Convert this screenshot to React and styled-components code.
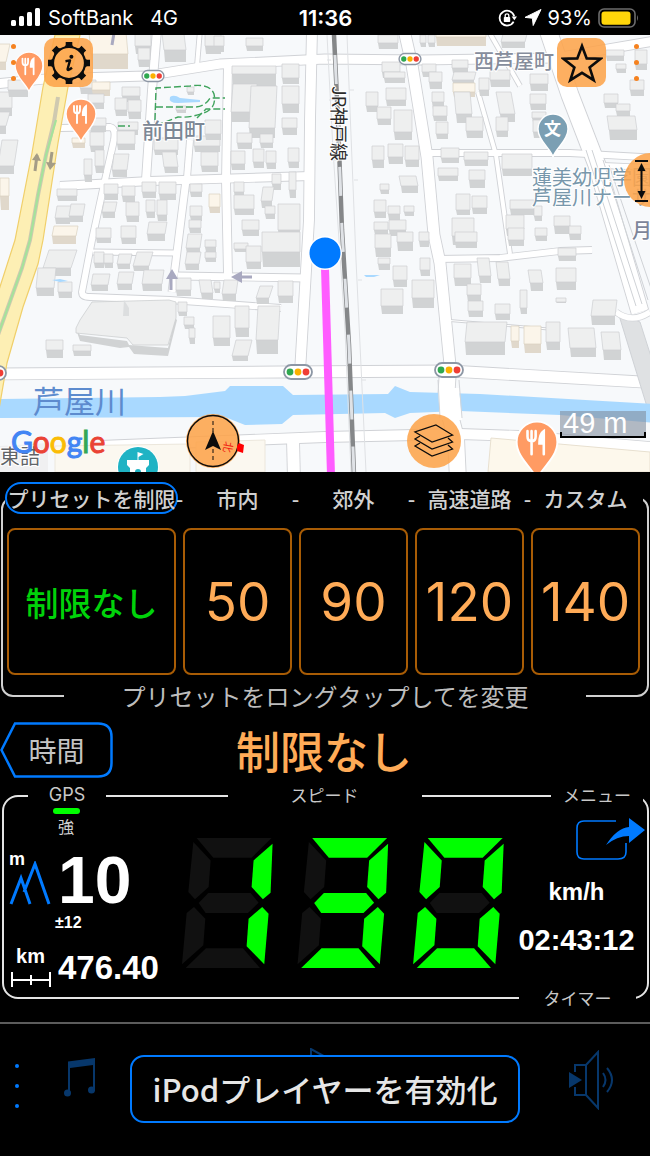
import React from "react";
import styled, { createGlobalStyle } from "styled-components";

const GlobalStyle = createGlobalStyle`
  * { box-sizing: border-box; }
  body { margin: 0; background: #000; }
  button { padding: 0; border: 0; background: none; color: inherit; font: inherit; cursor: pointer; }
  svg { display: block; }
`;

const ui = `Inter, "Noto Sans CJK JP", sans-serif`;
const jp = `"Noto Sans CJK JP", sans-serif`;
const heavy = `"Liberation Sans", "Noto Sans CJK JP", sans-serif`;
const blue = "#007aff";
const orange = "#ffab57";

const Screen = styled.main`
  min-height: 100vh;
  display: flex;
  flex-direction: column;
  overflow: hidden;
  background: #000;
  color: #d6d6d6;
  font-family: ${ui};
`;

/* ---------- status bar ---------- */

const StatusBar = styled.header`
  display: grid;
  grid-template-columns: 1fr auto 1fr;
  align-items: center;
  height: 35px;
  padding: 0 10px 0 11px;
  color: #fff;
  font-size: 20px;
  line-height: 24px;
`;

const StatusGroup = styled.div`
  display: flex;
  align-items: center;
  justify-content: ${(p) => (p.$end ? "flex-end" : "flex-start")};
  gap: ${(p) => p.$gap}px;
`;

const Network = styled.span`
  margin-left: 9px;
`;

const Clock = styled.time`
  font-size: 22px;
  font-weight: 600;
`;

function StatusIcons() {
  return (
    <StatusBar>
      <StatusGroup $gap={8}>
        <svg width="29" height="19" viewBox="0 0 29 19" fill="#fff">
          <rect x="0" y="12" width="5" height="6" rx="1.5" />
          <rect x="8" y="8" width="5" height="10" rx="1.5" />
          <rect x="16" y="4" width="5" height="14" rx="1.5" />
          <rect x="24" y="0" width="5" height="18" rx="1.5" />
        </svg>
        <span>SoftBank</span>
        <Network>4G</Network>
      </StatusGroup>
      <Clock>11:36</Clock>
      <StatusGroup $end $gap={6}>
        <svg width="20" height="18" viewBox="0 0 20 18" fill="none" stroke="#fff" strokeWidth="1.8">
          <path d="M15.6 12.6A7.4 7.4 0 1 1 16.2 7.2" />
          <path d="M13.6 7.4h5.4l-2.6 3.8z" fill="#fff" stroke="none" />
          <rect x="5.8" y="8" width="6.4" height="5" rx="0.8" fill="#fff" stroke="none" />
          <path d="M7.2 8.2V6.6a1.8 1.8 0 0 1 3.6 0v1.6" strokeWidth="1.3" />
        </svg>
        <svg width="18" height="17" viewBox="0 0 18 17">
          <path d="M17 0.5 1 8.4l7.4 0.8L9.2 16.5z" fill="#fff" stroke="#fff" strokeLinejoin="round" />
        </svg>
        <span>93%</span>
        <svg width="42" height="20" viewBox="0 0 42 20">
          <rect x="1" y="1" width="36" height="18" rx="5" fill="none" stroke="#6c6c6c" strokeWidth="1.6" />
          <rect x="3.5" y="3.4" width="29" height="13.4" rx="3" fill="#ffd60a" />
          <path d="M39 7v6q2-3 0-6z" fill="#6c6c6c" />
        </svg>
      </StatusGroup>
    </StatusBar>
  );
}

/* ---------- map ---------- */

const MapArea = styled.section`
  position: relative;
  height: 437px;
  overflow: hidden;
  background: #f7f9fb;
`;

const MapCanvas = styled.svg`
  width: 100%;
  height: 100%;
`;

// x, y, width, roof height, wall height, skew, warm tint
const buildings = [
  [-6, 44, 14, 18, 8, -2, 1], [-8, 92, 20, 16, 8, 0], [8, 80, 20, 10, 7, 0], [-6, 112, 14, 14, 8, -2],
  [90, 32, 37, 22, 15, 1, 1], [135, 34, 16, 12, 8, 0], [138, 48, 12, 12, 7, 0], [163, 34, 22, 16, 12, 1],
  [205, 34, 16, 12, 8, 0], [214, 36, 10, 10, 6, 0], [246, 38, 17, 8, 5, 0],
  [80, 80, 16, 8, 6, 0], [92, 82, 18, 8, 6, 0, 1], [88, 94, 16, 9, 6, 0], [122, 87, 18, 9, 6, 0], [115, 98, 12, 12, 6, 0],
  [128, 100, 13, 12, 7, 0], [72, 138, 13, 5, 5, 0, 1], [90, 118, 16, 8, 6, 0], [90, 132, 14, 14, 6, 0],
  [118, 122, 20, 8, 5, 0], [117, 131, 18, 13, 6, 0], [113, 154, 15, 16, 7, -1], [84, 159, 8, 16, 7, 0], [95, 150, 9, 16, 7, 0],
  [187, 87, 7, 5, 3, 0], [176, 106, 10, 4, 3, 0], [154, 138, 24, 12, 5, 0], [163, 152, 14, 15, 6, 1],
  [194, 136, 26, 10, 6, 0], [201, 152, 17, 14, 6, 0], [205, 120, 16, 14, 6, 0],
  [232, 66, 44, 8, 14, 0], [232, 84, 24, 28, 10, -1], [250, 86, 26, 42, 10, -1], [282, 64, 17, 14, 6, 0], [282, 86, 17, 18, 9, 0],
  [282, 118, 15, 10, 7, 0], [237, 133, 15, 10, 6, 0], [231, 151, 14, 13, 6, 0], [253, 149, 11, 13, 6, 0], [260, 134, 13, 9, 5, 0],
  [266, 151, 10, 12, 6, 0], [288, 148, 11, 14, 6, 0], [289, 172, 7, 18, 8, 0], [272, 174, 9, 10, 6, 0],
  [57, 189, 20, 7, 5, 0], [56, 206, 15, 12, 6, -1], [70, 204, 14, 12, 6, -1], [53, 226, 24, 10, 8, -1, 1], [46, 250, 28, 18, 8, -3],
  [37, 268, 18, 20, 8, -1], [58, 282, 14, 10, 6, 0], [0, 178, 9, 18, 14, 0, 1], [0, 140, 16, 26, 8, -2],
  [104, 184, 14, 10, 6, 0], [122, 186, 13, 10, 6, 0], [142, 182, 14, 10, 6, 0], [159, 182, 17, 12, 6, 0],
  [103, 202, 13, 10, 6, -1], [126, 202, 13, 14, 6, 0], [146, 200, 9, 12, 6, 0], [157, 200, 10, 15, 6, 0],
  [96, 228, 15, 10, 5, 0], [121, 226, 15, 12, 6, 0], [148, 222, 18, 12, 7, -1], [94, 252, 10, 11, 5, 0], [104, 254, 9, 9, 5, 0],
  [118, 254, 13, 10, 5, -1], [135, 252, 16, 14, 5, -2], [92, 274, 17, 11, 6, -1], [118, 272, 15, 12, 6, -1], [143, 270, 20, 14, 7, -1],
  [190, 184, 12, 8, 5, 0], [209, 194, 11, 13, 6, 0, 1], [190, 206, 12, 10, 5, 0], [189, 220, 12, 8, 5, 0], [187, 234, 14, 14, 6, -1],
  [186, 252, 14, 12, 6, -1], [205, 240, 11, 7, 5, 0], [205, 252, 11, 6, 4, 0], [234, 182, 10, 10, 6, 0],
  [234, 195, 20, 14, 6, 0], [262, 187, 11, 14, 7, -1], [265, 206, 10, 8, 5, 0], [278, 204, 22, 26, 8, 0], [242, 220, 17, 10, 6, 0],
  [234, 243, 14, 6, 3, 0], [246, 246, 15, 16, 7, 0], [262, 232, 38, 20, 15, 0],
  [176, 278, 15, 12, 6, 0], [200, 280, 12, 13, 6, 1], [214, 282, 6, 7, 4, 0], [223, 280, 14, 14, 7, -1], [258, 286, 13, 12, 6, -2], [278, 281, 15, 15, 7, 0],
  [178, 302, 9, 10, 4, 0], [184, 317, 10, 8, 4, 0], [189, 328, 6, 10, 6, 0], [213, 316, 17, 22, 8, 0], [235, 306, 14, 22, 9, 0],
  [257, 306, 22, 34, 14, -1], [234, 340, 16, 16, 5, -2], [46, 340, 17, 10, 8, 0], [73, 345, 18, 6, 5, 0],
  [378, 35, 20, 8, 6, 0], [420, 35, 6, 8, 4, 0], [428, 35, 7, 8, 4, 0], [436, 28, 50, 9, 9, 0, 1], [502, 34, 24, 8, 6, -1],
  [382, 62, 18, 10, 6, 0], [384, 72, 21, 6, 5, 0], [386, 88, 20, 12, 6, 0], [366, 92, 12, 14, 6, 0], [377, 107, 14, 12, 6, 0], [394, 110, 18, 22, 8, 0],
  [422, 64, 14, 8, 5, 0], [429, 72, 13, 10, 7, 0], [432, 92, 12, 10, 8, 0], [433, 106, 14, 10, 5, 0], [436, 122, 12, 12, 5, 0],
  [452, 60, 16, 8, 5, 0], [453, 72, 22, 8, 3, -1], [453, 83, 22, 9, 5, 0, 1], [455, 92, 16, 22, 9, 1], [479, 78, 10, 12, 6, 0],
  [490, 70, 20, 10, 7, 0], [530, 74, 18, 10, 7, 0], [498, 92, 15, 22, 8, 2], [466, 117, 17, 14, 7, 0], [496, 117, 12, 14, 6, 0],
  [530, 94, 16, 10, 6, 0], [532, 112, 14, 6, 4, 0], [533, 120, 14, 12, 6, 0], [606, 50, 18, 6, 5, 0], [616, 64, 10, 5, 4, 0],
  [604, 94, 14, 9, 5, 0], [616, 104, 14, 7, 5, 0], [608, 116, 28, 14, 10, 1], [635, 50, 12, 14, 6, 0], [630, 80, 14, 10, 6, 0],
  [372, 146, 12, 14, 8, 0], [388, 144, 15, 13, 7, 0], [405, 146, 14, 14, 7, 0], [400, 176, 17, 10, 7, 1], [380, 184, 9, 6, 4, 0],
  [441, 148, 18, 10, 5, 0], [438, 168, 20, 8, 5, 0], [464, 152, 24, 8, 6, 0], [469, 170, 16, 10, 8, 0], [502, 154, 30, 15, 7, 0],
  [374, 200, 12, 12, 6, 0], [388, 206, 12, 8, 6, 0], [374, 222, 14, 8, 5, 0], [389, 220, 17, 10, 6, 0], [404, 206, 10, 6, 4, 0],
  [456, 194, 14, 16, 5, 0], [472, 196, 15, 12, 6, 0], [452, 218, 22, 18, 9, 0], [510, 200, 24, 9, 6, 0], [506, 215, 18, 14, 7, 0], [534, 206, 8, 10, 5, 0], [554, 216, 16, 10, 8, 0],
  [375, 234, 16, 14, 9, 0], [397, 232, 16, 10, 9, 0], [378, 258, 12, 6, 6, 0], [419, 232, 10, 9, 6, 0], [420, 258, 10, 12, 6, 0],
  [393, 266, 14, 14, 7, 0], [381, 289, 22, 17, 8, 0], [412, 280, 22, 18, 10, 0], [455, 232, 22, 10, 6, 0], [508, 228, 16, 12, 6, 0], [535, 228, 12, 8, 5, 0], [569, 226, 12, 8, 6, 0],
  [454, 264, 17, 14, 8, 0], [478, 258, 12, 18, 7, 1], [497, 262, 12, 17, 7, 1], [529, 270, 13, 13, 8, 1], [556, 268, 20, 14, 8, 0], [558, 248, 18, 8, 5, 0],
  [467, 284, 14, 11, 7, 0], [468, 301, 15, 10, 6, 0], [495, 304, 15, 10, 6, 0], [520, 290, 7, 18, 6, 0], [556, 298, 10, 4, 1, 0], [592, 300, 24, 16, 9, -1],
  [466, 322, 40, 20, 13, -1], [511, 326, 8, 15, 7, 0, 1], [524, 326, 17, 18, 9, 0, 1], [546, 322, 14, 20, 8, 0], [569, 328, 26, 20, 9, 1], [602, 332, 18, 18, 10, 1],
];

function Building({ data: [x, y, w, h, d, k, warm] }) {
  const right = x + w;
  const base = y + h;
  return (
    <g strokeWidth="0.7" strokeLinejoin="round">
      <path
        d={`M${x + k} ${base}H${right + k}V${base + d}H${x + k + 1}z`}
        fill={warm ? "#e0d8cb" : "#d1d3d4"}
      />
      <path
        d={`M${x - k} ${y}H${right - k}L${right + k} ${base}H${x + k}z`}
        fill={warm ? "#fbf5ea" : "#eeefef"}
        stroke={warm ? "#dad1c0" : "#cdcfd1"}
      />
    </g>
  );
}

const roads = [
  ["M-5 84L45 79L145 76L220 64L325 59L420 60L555 58L660 40", 9],
  ["M157 30L152 90L146 180", 8],
  ["M200 30L197 66", 4],
  ["M312 30L310 120L309 220L300 372", 10],
  ["M60 128L110 127Q116 128 114 140L105 180L92 240L82 292Q82 297 90 297L170 300L281 308", 6],
  ["M60 186L150 181L310 176", 8],
  ["M186 180L172 292", 7],
  ["M228 64L226 180L228 275", 8],
  ["M190 140L187 178", 6],
  ["M93 252L176 253", 5],
  ["M178 276L306 278", 7],
  ["M404 30L412 65L427 157L434 235L440 263L450 365", 11],
  ["M427 153L570 153L660 158", 6],
  ["M438 259L500 258L560 251L592 250", 6],
  ["M478 92L496 155L510 254", 4],
  ["M488 30L520 86", 4],
  ["M548 30L570 95L597 165L640 312", 17],
  ["M592 165L660 168", 5],
  ["M440 262L444 320L560 330", 1],
  ["M-5 374L280 372L450 371L660 383", 11],
  ["M448 370L446 400L456 438L458 480", 16],
  ["M100 446L325 437L460 434L520 436L660 448", 10],
  ["M293 440L294 480", 12],
];

const trainLines = [
  "M586 150L636 306", "M592 150L642 304", "M603 160L648 300", "M609 165L655 300",
];

function Roads() {
  return (
    <g fill="none" strokeLinejoin="round">
      {roads.map(([d, w]) => <path key={d} d={d} stroke="#d0d2d6" strokeWidth={w + 1.8} />)}
      {roads.map(([d, w]) => <path key={d} d={d} stroke="#fff" strokeWidth={w} />)}
    </g>
  );
}

function Signal({ x, y, s = 1 }) {
  return (
    <g transform={`translate(${x} ${y}) scale(${s})`}>
      <rect x="-14" y="-7" width="28" height="14" rx="7" fill="#fff" stroke="#8d97a5" strokeWidth="1.8" />
      <circle cx="-8" r="3.4" fill="#2fa84f" />
      <circle r="3.4" fill="#fbb100" />
      <circle cx="8" r="3.4" fill="#f03e35" />
    </g>
  );
}

function Pin({ x, y, r, color, children }) {
  const s = r / 14;
  return (
    <g transform={`translate(${x} ${y}) scale(${s})`}>
      <path d="M0 28C-2 20-15 12-15 0A15 15 0 0 1 15 0C15 12 2 20 0 28z" fill={color} stroke="#fff" strokeWidth="1.4" />
      {children}
    </g>
  );
}

function Cutlery() {
  return (
    <g fill="none" stroke="#fff" strokeWidth="1.9" strokeLinecap="round">
      <path d="M-7-8v4q0 3.4 3 3.4T-1-4v-4M-4-8V9" />
      <path d="M5 9V-8Q1.8-6 1.8 1H5" fill="#fff" />
    </g>
  );
}

const Label = styled.text`
  font-family: ${jp};
  font-size: ${(p) => p.$size}px;
  font-weight: ${(p) => p.$weight || 400};
  fill: ${(p) => p.$color};
  stroke: #fff;
  stroke-width: ${(p) => (p.$bare ? 0 : 2)}px;
  paint-order: stroke;
`;

const Wordmark = styled.text`
  font-family: Lato, sans-serif;
  font-size: 30px;
  font-weight: 400;
`;

const WordmarkLetter = styled.tspan`
  fill: ${(p) => p.$color};
  stroke: ${(p) => p.$color};
  stroke-width: 1px;
`;

const wordmark = [["G", "#4285f4"], ["o", "#ea4335"], ["o", "#fbbc05"], ["g", "#4285f4"], ["l", "#34a853"], ["e", "#ea4335"]];

function MapScene() {
  return (
    <MapCanvas viewBox="0 35 650 437" preserveAspectRatio="xMidYMid slice" role="img" aria-label="地図">
      <rect x="-400" y="35" width="1500" height="437" fill="#f7f9fb" />
      <Roads />
      <path d="M55 472V446L190 444V472z M196 472V442L265 440V472z" fill="#fbf8f0" stroke="#ece7dc" />
      <path d="M488 472L491 438L650 452V472z" fill="#fdf8ec" stroke="#e8e0d0" />
      <path d="M0 446L48 443V472H0z" fill="#f0f0f1" />
      <path d="M618 312L640 322L668 410L648 410z" fill="#dfe1e3" stroke="#cfd2d6" />
      <path d="M616 312Q632 324 650 312" fill="none" stroke="#d3d5d9" strokeWidth="7" />
      <path d="M616 312Q632 324 650 312" fill="none" stroke="#fff" strokeWidth="5.5" />
      <g fill="none" stroke="#cfd2d6" strokeWidth="1">
        {trainLines.map((d) => <path key={d} d={d} />)}
      </g>
      <path
        d="M-5 399L160 397L185 396L225 391L230 386L283 386L293 395L388 394L395 386L410 392L480 394L655 404V423L560 415L460 411L410 413L395 418L385 413L293 415L282 424L245 425L225 417L-5 418z"
        fill="#a9d9ff"
      />
      <path d="M438 388H459L462 420H440z" fill="#fff" />
      <path d="M438 380L440 418M459 380L462 418" stroke="#d3d5d9" />
      <path d="M80 35L68 87L58 143L43 240L38 264L23 307L7 363L-2 415V293L15 240L32 153L43 87L55 35z" fill="#fdefb4" stroke="#f0cf6a" strokeWidth="1.2" />
      <path d="M58 97L54 122L46 155L38 195L30 240L22 268L-2 335" fill="none" stroke="#cfc9b0" strokeWidth="4" />
      <path d="M56 120L46 155L38 195L30 240L22 268L-2 335" fill="none" stroke="#a5e29b" strokeWidth="2.2" />
      <g>{buildings.map((b) => <Building key={b.slice(0, 3).join("-")} data={b} />)}</g>

      <path d="M76 329L80 335L127 341L129 345L168 348L175 318L177 320L168 356L134 354L129 347L120 348L80 341z" fill="#d1d3d4" />
      <path d="M92 302L169 300L176 302L176 318L168 345H133L127 338L76 333L76 328L80 320z" fill="#eeefef" stroke="#cdcfd1" strokeWidth="0.8" />
      <path d="M124 300l5 8v8h-6z" fill="#dcdedf" />

      <g fill="none" stroke="#3fa35c" strokeWidth="1.4" strokeDasharray="7 3">
        <path d="M155 120L156 88L190 86Q210 83 214 94Q217 108 204 113Q190 118 178 117L160 124" />
        <path d="M156 107H192Q204 108 210 98H225M197 118L206 109L225 109M118 126H130" />
      </g>
      <path d="M170 97Q174 94 180 98L200 100V102L178 103Q168 103 170 97z" fill="#a9d9ff" />
      <path d="M364 275H380L374 277H366zM52 280l8-1 8 2-8 1z" fill="#a9d9ff" />

      <g stroke="#dfe1e4" fill="none">
        <path d="M327 35L333 150L345 330L351 472M347 35L356 260L366 472M327 60h4M329 100h4M334 160h4M350 90h4M354 180h4M358 280h4M362 380h4" />
      </g>
      <path d="M334 35L338 120L342 230L349 345L354 475" fill="none" stroke="#858789" strokeWidth="4.5" />
      <path d="M334 35L338 120L342 230L349 345L354 475" fill="none" stroke="#dfe2e6" strokeWidth="3" strokeDasharray="29 27" strokeDashoffset="-20" />

      <g fill="none" stroke="#a49c86" strokeWidth="3">
        <path d="M35 171L37 155M52 152L50 166" />
        <path d="M32 160l5-7 4 8zM46 162l4 8 6-7z" fill="#a49c86" stroke="none" />
      </g>
      <g stroke="#a9a9c0" strokeWidth="3" fill="#a9a9c0">
        <path d="M171 290V276M252 277H238" fill="none" />
        <path d="M166 279l6-10 6 10zM242 271l-11 6 11 6z" stroke="none" />
        <path d="M112 45l2-12" />
      </g>

      <path d="M325 268L331 475" stroke="#ff5cff" strokeWidth="8" />
      <circle cx="325" cy="253" r="17" fill="#fff" />
      <circle cx="325" cy="253" r="15.5" fill={blue} />

      <Signal x="153" y="76" s={0.78} />
      <Signal x="410" y="59" s={0.78} />
      <Signal x="298" y="372" />
      <Signal x="449" y="370" />
      <Signal x="-8" y="373" />

      <Pin x="29" y="66" r={13} color="#ff9b63"><Cutlery /></Pin>
      <Pin x="81" y="114" r={14} color="#ff9b63"><Cutlery /></Pin>
      <Pin x="537" y="442" r={19} color="#ff9b63"><Cutlery /></Pin>
      <Pin x="553" y="129" r={14} color="#7b9fb3">
        <Label x="-9" y="6" $size={17} $weight={700} $color="#fff" $bare>文</Label>
      </Pin>

      <circle cx="138" cy="467" r="21" fill="#fff" />
      <circle cx="138" cy="467" r="20" fill="#1fb3c4" />
      <path d="M127 460h22v5l-3 3v8h-5v-4a3 3 0 0 0-6 0v4h-5v-8l-3-3zM137.500 461v-9l6 2-5 3v4z" fill="#fff" />

      <Label x="142" y="138" $size={21} $weight={500} $color="#7c8795">前田町</Label>
      <Label x="474" y="69" $size={20} $weight={500} $color="#868d9c">西芦屋町</Label>
      <Label x="532" y="185" $size={20} $color="#7897ab">蓮美幼児学園</Label>
      <Label x="532" y="205" $size={20} $color="#7897ab">芦屋川ナーサリー</Label>
      <Label x="632" y="238" $size={20} $weight={500} $color="#7d869a">月</Label>
      <Label x="33" y="413" $size={31} $color="#5d8bce" $bare>芦屋川</Label>
      <Label x="0" y="464" $size={20} $color="#616468">東詰</Label>
      <Label transform="translate(332 86) rotate(90)" $size={18} $color="#2b2b2b">JR神戸線</Label>
      <Wordmark x="11" y="453">
        {wordmark.map(([letter, color], i) => <WordmarkLetter key={i} $color={color}>{letter}</WordmarkLetter>)}
      </Wordmark>
    </MapCanvas>
  );
}

const MapTopBar = styled.div`
  position: absolute;
  inset: 3px 11px auto 11px;
  display: flex;
  justify-content: space-between;
`;

const MapTopGroup = styled.div`
  display: flex;
  align-items: center;
  gap: 28px;
`;

const MapButton = styled.button`
  display: grid;
  place-items: center;
  width: ${(p) => (p.$round ? 54 : 49)}px;
  height: ${(p) => (p.$round ? 54 : 49)}px;
  border-radius: ${(p) => (p.$round ? "50%" : "10px")};
  background: rgba(253, 163, 73, 0.87);
`;

const FloatingButton = styled(MapButton)`
  position: absolute;
  top: ${(p) => p.$top}px;
  left: ${(p) => p.$left}%;
`;

const Dots = styled.span`
  display: flex;
  flex-direction: column;
  gap: ${(p) => p.$gap}px;

  &::before, &::after { content: ""; }
  &::before, &::after, i {
    width: ${(p) => p.$size}px;
    height: ${(p) => p.$size}px;
    border-radius: 50%;
    background: ${(p) => p.$color};
  }
`;

const DotsButton = styled.button`
  display: flex;
`;

const ScaleBar = styled.div`
  position: absolute;
  right: 4px;
  bottom: 34px;
  width: 86px;
  height: 27px;
  padding-left: 1px;
  border: 2px solid #000;
  border-top: 0;
  border-image: linear-gradient(transparent 80%, #000 80%) 2;
  background: rgba(130, 142, 158, 0.6);
  color: #fff;
  font-family: ${heavy};
  font-size: 29px;
  line-height: 25px;
`;

const teeth = [0, 45, 90, 135, 180, 225, 270, 315];

function MapControls() {
  return (
    <>
      <MapTopBar>
        <MapTopGroup>
          <DotsButton aria-label="左メニュー"><Dots $gap={11} $size={5} $color="#f58220"><i /></Dots></DotsButton>
          <MapButton aria-label="設定">
            <svg width="44" height="44" viewBox="-22 -22 44 44">
              <circle r="16" fill="none" stroke="#0c0c0c" strokeWidth="2.2" />
              {teeth.map((a) => (
                <path key={a} d="M-3.300-21h6.600v3l1.500 2.500h-9.600l1.500-2.500z" transform={`rotate(${a})`} fill="#0c0c0c" />
              ))}
              <circle cx="2.4" cy="-6.2" r="2" fill="#0c0c0c" />
              <path d="M-3.500-1.800L1-2.600L-1.400 6Q-1.600 8.500 3 4.800" fill="none" stroke="#0c0c0c" strokeWidth="2.4" strokeLinejoin="round" />
            </svg>
          </MapButton>
        </MapTopGroup>
        <MapTopGroup>
          <MapButton aria-label="お気に入り">
            <svg width="42" height="42" viewBox="-21 -21 42 42">
              <path d="M0-17L4.700-4.600L18.500-4.200L7.600 4.400L11.700 17.200L0 9.800L-11.700 17.200L-7.600 4.400L-18.500-4.200L-4.700-4.600z" fill="none" stroke="#0c0c0c" strokeWidth="2.6" />
            </svg>
          </MapButton>
          <DotsButton aria-label="右メニュー"><Dots $gap={11} $size={5} $color="#f58220"><i /></Dots></DotsButton>
        </MapTopGroup>
      </MapTopBar>
      <FloatingButton $round $top={118} $left={96} aria-label="傾き">
        <svg width="54" height="54" viewBox="0 0 54 54" stroke="#0c0c0c" strokeWidth="2" fill="#0c0c0c">
          <path d="M11 8h13M11 48h13M17.500 14v28" />
          <path d="M17.500 10l4 8h-8zM17.500 46l4-8h-8z" stroke="none" />
        </svg>
      </FloatingButton>
      <FloatingButton $round $top={379} $left={28.6} aria-label="コンパス">
        <svg width="54" height="54" viewBox="-27 -27 54 54" overflow="visible">
          <circle r="25.5" fill="none" stroke="#0c0c0c" strokeWidth="1.4" />
          <path d="M0-20V20" stroke="#0c0c0c" strokeDasharray="4 3" />
          <path d="M0-10L8 9L0 5L-8 9z" fill="#0c0c0c" />
          <path d="M24 5l2-3 5 2-1 8-6-2z" fill="#f00" />
          <CompassMark transform="translate(12 0) rotate(100)">北</CompassMark>
        </svg>
      </FloatingButton>
      <FloatingButton $round $top={379} $left={62.6} aria-label="レイヤー">
        <svg width="42" height="36" viewBox="-21 -18 42 36" fill="none" stroke="#0c0c0c" strokeWidth="1.3">
          <path d="M2-16L18.500-6L-2 1L-19-9z" />
          <path d="M-14-5L-19-2L-2 8L18.500 1L14-3" />
          <path d="M-14 2L-19 5L-2 15L18.500 8L14 4" />
        </svg>
      </FloatingButton>
      <ScaleBar>49 m</ScaleBar>
    </>
  );
}

const CompassMark = styled.text`
  font-family: ${jp};
  font-size: 11px;
  fill: #f01c12;
`;

/* ---------- presets ---------- */

const PresetFrame = styled.section`
  margin: 25px 1px 0;
  border: 2px solid #d0d0d0;
  border-radius: 12px;
`;

const PresetHeader = styled.div`
  display: grid;
  grid-template-columns: 169fr 7px 109fr 7px 109fr 7px 109fr 7px 109fr;
  align-items: center;
  justify-items: center;
  height: 32px;
  margin: -17px 4px 0 2px;
  padding: 0 3px 0 2px;
  background: #000;
  color: #d0d0d0;
  font-family: ${jp};
  font-size: 21px;
  font-weight: 500;
  line-height: 28px;
  white-space: nowrap;
`;

const PresetPill = styled.button`
  display: flex;
  justify-content: center;
  justify-self: stretch;
  margin: 0 -2px;
  height: 32px;
  align-items: center;
  border: 2px solid ${blue};
  border-radius: 16px;
`;

const PresetRow = styled.div`
  display: grid;
  grid-template-columns: 169fr 109fr 109fr 109fr 109fr;
  gap: 7px;
  margin: 14px 7px 0 4px;
`;

const PresetButton = styled.button`
  height: 147px;
  border: 2px solid #a85c05;
  border-radius: 8px;
  color: ${(p) => (p.$free ? "#00d30a" : orange)};
  font-family: ${(p) => (p.$free ? jp : ui)};
  font-size: ${(p) => (p.$free ? 33 : 53)}px;
  font-weight: ${(p) => (p.$free ? 500 : 400)};
  white-space: nowrap;
`;

const PresetHint = styled.p`
  width: 81%;
  margin: 4px auto -18px;
  background: #000;
  font-family: ${jp};
  font-size: 24px;
  line-height: 34px;
  text-align: center;
  color: #bdbdbd;
`;

const presets = [["市内", 50], ["郊外", 90], ["高速道路", 120], ["カスタム", 140]];

function Presets() {
  return (
    <PresetFrame>
      <PresetHeader>
        <PresetPill>プリセットを制限</PresetPill>
        {presets.map(([name]) => (
          <React.Fragment key={name}>
            <span>-</span>
            <span>{name}</span>
          </React.Fragment>
        ))}
      </PresetHeader>
      <PresetRow>
        <PresetButton $free>制限なし</PresetButton>
        {presets.map(([name, value]) => <PresetButton key={name} aria-label={`${name} ${value}`}>{value}</PresetButton>)}
      </PresetRow>
      <PresetHint>プリセットをロングタップしてを変更</PresetHint>
    </PresetFrame>
  );
}

/* ---------- current limit ---------- */

const LimitRow = styled.section`
  display: grid;
  grid-template-columns: 113px 1fr 113px;
  align-items: center;
  margin-top: 25px;
`;

const BackButton = styled.button`
  display: grid;
  place-items: center;
  height: 56px;
  font-family: ${jp};
  font-size: 28px;
  color: #c4c4c4;

  > * { grid-area: 1 / 1; }
`;

const Limit = styled.h1`
  margin: 0 2px 0 0;
  color: ${orange};
  font-family: ${jp};
  font-size: 44px;
  font-weight: 500;
  line-height: 56px;
  text-align: center;
`;

/* ---------- speed panel ---------- */

const SpeedFrame = styled.section`
  margin: 17px 1px 0 2px;
  border: 2px solid #e4e4e4;
  border-radius: 16px;
`;

const FrameLabel = styled.h2`
  width: ${(p) => p.$width}px;
  margin: ${(p) => p.$margin || 0};
  background: #000;
  color: #c8c8c8;
  font-family: ${(p) => (p.$latin ? ui : jp)};
  font-size: ${(p) => (p.$latin ? 18 : 17)}px;
  font-weight: 400;
  line-height: 24px;
  text-align: center;
`;

const SpeedHeader = styled.div`
  display: flex;
  justify-content: space-between;
  margin: -14px 4px 0 24px;
`;

const SpeedBody = styled.div`
  display: grid;
  grid-template-columns: 168px 1fr 130px;
  height: 178px;
`;

const LeftColumn = styled.div`
  display: flex;
  flex-direction: column;
  padding-left: 5px;
  color: #fff;
  font-family: ${heavy};
  font-weight: 700;
`;

const GpsStatus = styled.div`
  display: flex;
  flex-direction: column;
  align-items: center;
  width: 114px;
  color: #d0d0d0;
  font-family: ${jp};
  font-size: 16px;
  font-weight: 400;
  line-height: 24px;

  &::before {
    content: "";
    width: 27px;
    height: 6px;
    margin-top: 1px;
    border-radius: 3px;
    background: #0f0;
  }
`;

const Metric = styled.div`
  display: flex;
  align-items: ${(p) => (p.$end ? "center" : "stretch")};
  gap: 6px;
  margin-top: ${(p) => p.$top}px;
`;

const MetricUnit = styled.div`
  display: flex;
  flex-direction: column;
  align-items: ${(p) => (p.$center ? "center" : "flex-start")};
  width: 43px;
  font-size: ${(p) => (p.$center ? 20 : 18)}px;
  line-height: 20px;
`;

const AltitudeIcon = styled.svg`
  margin-top: -8px;
`;

const MetricValue = styled.strong`
  font-size: ${(p) => p.$size}px;
  line-height: ${(p) => p.$line}px;
`;

const Accuracy = styled.span`
  margin: 3px 0 0 46px;
  font-size: 16px;
  line-height: 18px;
`;

const SpeedDigits = styled.div`
  display: flex;
  justify-content: center;
  align-items: center;
  padding: 8px 2px 0 0;
`;

const RightColumn = styled.div`
  display: flex;
  flex-direction: column;
  align-items: center;
  padding: 9px 11px 0 0;
  color: #fff;
  font-family: ${heavy};
  font-weight: 700;
`;

const ShareButton = styled.button`
  align-self: flex-end;
  margin-right: -9px;
`;

const SpeedUnit = styled.span`
  margin-top: 16px;
  font-size: 24px;
  line-height: 28px;
`;

const Timer = styled.time`
  margin-top: 18px;
  font-size: 29px;
  line-height: 32px;
`;

const SpeedFooter = styled.div`
  display: flex;
  justify-content: flex-end;
  margin: 1px 11px -13px 0;
`;

const segments = {
  a: "44,0 269,0 209,59 94,59",
  f: "34,12 86,67 80,147 39,184 19,162",
  b: "272,17 266,164 243,184 209,147 215,67",
  g: "50,195 79,165 206,165 230,194 198,225 71,225",
  e: "36,207 70,242 64,322 0,379 14,225",
  c: "241,207 260,227 247,379 194,325 200,242",
  d: "72,331 183,331 234,390 11,390",
};

const lit = { 0: "abcdef", 1: "bc", 3: "abcdg" };

function SevenSegment({ value }) {
  return (
    <svg width="323" height="130" viewBox="0 0 970 390" role="img" aria-label={value}>
      {[...value].map((digit, i) => (
        <g key={i} transform={`translate(${i * 347} 0)`}>
          {Object.entries(segments).map(([name, points]) => (
            <polygon key={name} points={points} fill={lit[digit].includes(name) ? "#0f0" : "#111"} />
          ))}
        </g>
      ))}
    </svg>
  );
}

function SpeedPanel() {
  return (
    <SpeedFrame>
      <SpeedHeader>
        <FrameLabel $latin $width={78}>GPS</FrameLabel>
        <FrameLabel $width={194} $margin="0 8px 0 0">スピード</FrameLabel>
        <FrameLabel $width={92}>メニュー</FrameLabel>
      </SpeedHeader>
      <SpeedBody>
        <LeftColumn>
          <GpsStatus>強</GpsStatus>
          <Metric $top={11}>
            <MetricUnit>
              m
              <AltitudeIcon width="43" height="46" viewBox="0 0 43 46" fill="none" stroke={blue} strokeWidth="3">
                <path d="M2 43L12 17L21 43M15 31L26 3L40 43" />
              </AltitudeIcon>
            </MetricUnit>
            <MetricValue $size={66} $line={62}>10</MetricValue>
          </Metric>
          <Accuracy>±12</Accuracy>
          <Metric $end $top={14}>
            <MetricUnit $center>
              km
              <svg width="40" height="24" viewBox="0 0 40 24" fill="none" stroke="#fff" strokeWidth="2">
                <path d="M1 6V21M39 6V21M1 14H39M20 9V19" />
              </svg>
            </MetricUnit>
            <MetricValue $size={33} $line={44}>476.40</MetricValue>
          </Metric>
        </LeftColumn>
        <SpeedDigits><SevenSegment value="130" /></SpeedDigits>
        <RightColumn>
          <ShareButton aria-label="共有">
            <svg width="70" height="46" viewBox="0 0 70 46">
              <path d="M41 5H9Q2 5 2 12V36Q2 43 9 43H43Q51 43 51 36V27" fill="none" stroke={blue} strokeWidth="1.6" />
              <path d="M54 2L70 14L54 27V20Q42 20 31 29Q42 12 54 11z" fill={blue} />
            </svg>
          </ShareButton>
          <SpeedUnit>km/h</SpeedUnit>
          <Timer>02:43:12</Timer>
        </RightColumn>
      </SpeedBody>
      <SpeedFooter><FrameLabel $width={117}>タイマー</FrameLabel></SpeedFooter>
    </SpeedFrame>
  );
}

/* ---------- player ---------- */

const Player = styled.footer`
  flex: 1;
  display: grid;
  grid-template-columns: 50px 80px 1fr 130px;
  align-items: start;
  margin-top: 23px;
  padding-top: 24px;
  border-top: 2px solid #5c5c5c;
`;

const PlayerSlot = styled.div`
  grid-area: 1 / ${(p) => p.$column};
  justify-self: ${(p) => p.$align || "start"};
  margin: ${(p) => p.$margin || 0};
`;

const EnableButton = styled.button`
  grid-area: 1 / 3;
  position: relative;
  margin-top: 7px;
  padding-bottom: 2px;
  height: 68px;
  border: 2px solid ${blue};
  border-radius: 14px;
  background: #000;
  color: #e6e6e6;
  font-family: ${jp};
  font-size: 31px;
  font-weight: 500;
  white-space: nowrap;
`;

const IconButton = styled.button`
  display: block;
`;

function PlayerBar() {
  const dim = "#07376b";
  return (
    <Player>
      <PlayerSlot $column={1} $margin="16px 0 0 15px">
        <DotsButton aria-label="プレイヤーメニュー">
          <Dots $gap={16} $size={4} $color={blue}><i /></Dots>
        </DotsButton>
      </PlayerSlot>
      <PlayerSlot $column={2} $margin="9px 0 0 14px">
        <IconButton aria-label="ミュージック">
          <svg width="33" height="40" viewBox="0 0 33 40" fill={dim}>
            <path d="M4 4.500L31 1V34H29V8L6 11V37H4z" />
            <circle cx="3.5" cy="36" r="3.5" />
            <circle cx="27.500" cy="33" r="3.5" />
          </svg>
        </IconButton>
      </PlayerSlot>
      <PlayerSlot $column={3} $align="center">
        <svg width="30" height="30" viewBox="0 0 30 30" fill="none" stroke={dim} strokeWidth="2">
          <path d="M1 28V1L30 17" />
        </svg>
      </PlayerSlot>
      <EnableButton>iPodプレイヤーを有効化</EnableButton>
      <PlayerSlot $column={4} $align="center" $margin="2px 0 0 14px">
        <IconButton aria-label="音量">
          <svg width="46" height="60" viewBox="0 0 46 60" fill="none" stroke={dim} strokeWidth="2">
            <path d="M6 22V15H17V45H6V37M17 15L29 2V58L17 45V15" />
            <path d="M0 22L13 30L0 38z" fill={dim} stroke="none" />
            <path d="M34 23Q39 30 34 37M38 18Q48 30 38 42" />
          </svg>
        </IconButton>
      </PlayerSlot>
    </Player>
  );
}

export default function App() {
  return (
    <Screen>
      <GlobalStyle />
      <StatusIcons />
      <MapArea>
        <MapScene />
        <MapControls />
      </MapArea>
      <Presets />
      <LimitRow>
        <BackButton>
          <svg width="113" height="56" viewBox="0 0 113 56" fill="none" stroke={blue} strokeWidth="2.5">
            <path d="M15 1.500H98Q111.500 1.500 111.500 15V41Q111.500 54.500 98 54.500H15L1.500 28z" />
          </svg>
          <span>時間</span>
        </BackButton>
        <Limit>制限なし</Limit>
      </LimitRow>
      <SpeedPanel />
      <PlayerBar />
    </Screen>
  );
}
